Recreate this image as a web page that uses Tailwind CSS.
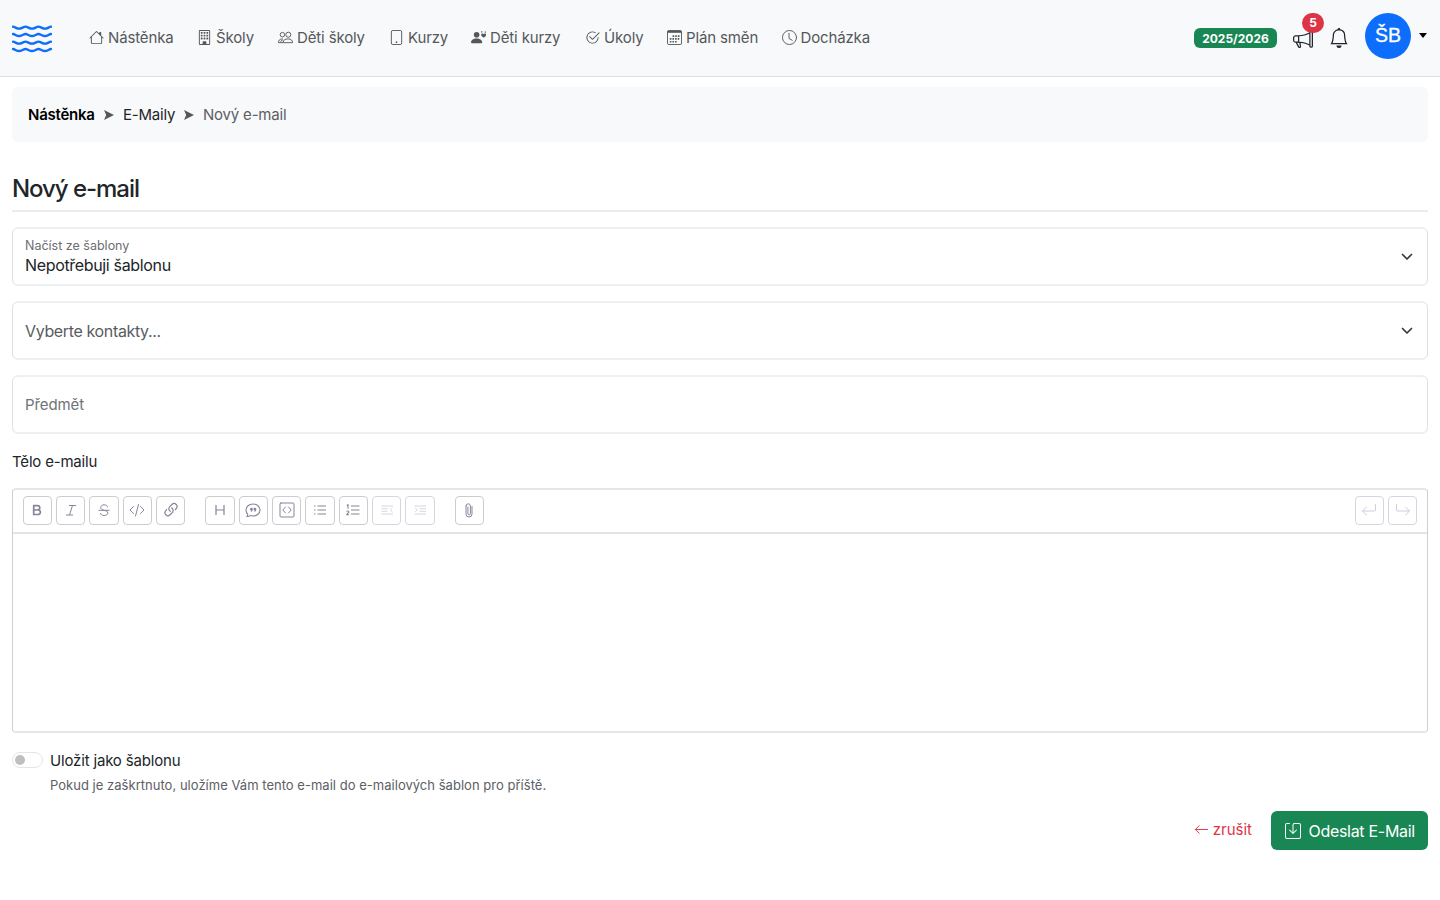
<!DOCTYPE html>
<html lang="cs">
<head>
<meta charset="utf-8">
<title>Nový e-mail</title>
<script src="https://cdn.jsdelivr.net/npm/@tailwindcss/browser@4"></script>
</head>
<body class="bg-white text-[#212529] font-['Inter',sans-serif] text-[15px] w-[1440px] h-[900px] overflow-hidden">
<header class="h-[77px] bg-[#f8f9fb] border-b border-[#dee2e6] flex items-center pl-3 pr-3 text-[#55585a]">
  <svg class="w-10 h-[30px] mt-px text-[#0d6efd]" viewBox="0 0 40 30" fill="none" stroke="currentColor" stroke-width="2.3" stroke-linecap="round">
    <path d="M1 2.7c2 .2 3.500 2 6 2s4.500-2 6.500-2 4 2 6.500 2 4.500-2 6.500-2 4 2 6.500 2 4-1.800 6-2M1 10c2 .2 3.500 2 6 2s4.500-2 6.500-2 4 2 6.500 2 4.500-2 6.500-2 4 2 6.500 2 4-1.800 6-2M1 17.700c2 .2 3.500 2 6 2s4.500-2 6.500-2 4 2 6.500 2 4.500-2 6.500-2 4 2 6.500 2 4-1.800 6-2M1 25c2 .2 3.500 2 6 2s4.500-2 6.500-2 4 2 6.500 2 4.500-2 6.500-2 4 2 6.500 2 4-1.800 6-2"/>
  </svg>
  <nav class="ml-[37px] flex items-center h-6 -mt-px whitespace-nowrap tracking-[-0.14px]">
    <a class="flex items-center gap-1 w-[108px]"><svg class="size-[15px]" viewBox="0 0 16 16" fill="currentColor"><path d="M8.707 1.5a1 1 0 0 0-1.414 0L.646 8.146a.5.5 0 0 0 .708.708L2 8.207V13.500A1.500 1.500 0 0 0 3.500 15h9a1.500 1.500 0 0 0 1.500-1.500V8.207l.646.647a.5.5 0 0 0 .708-.708L13 5.793V2.500a.5.5 0 0 0-.5-.5h-1a.5.5 0 0 0-.5.5v1.293zM13 7.207V13.500a.5.5 0 0 1-.5.5h-9a.5.5 0 0 1-.5-.5V7.207l5-5z"/></svg><span class="pt-[2px]">Nástěnka</span></a>
    <a class="flex items-center gap-1 w-[81px]"><svg class="size-[15px]" viewBox="0 0 16 16" fill="currentColor"><path d="M4 2.500a.5.5 0 0 1 .5-.5h1a.5.5 0 0 1 .5.5v1a.5.5 0 0 1-.5.5h-1a.5.5 0 0 1-.5-.5zm3 0a.5.5 0 0 1 .5-.5h1a.5.5 0 0 1 .5.5v1a.5.5 0 0 1-.5.5h-1a.5.5 0 0 1-.5-.5zm3.500-.5a.5.5 0 0 0-.5.5v1a.5.5 0 0 0 .5.5h1a.5.5 0 0 0 .5-.5v-1a.5.5 0 0 0-.5-.5zM4 5.500a.5.5 0 0 1 .5-.5h1a.5.5 0 0 1 .5.5v1a.5.5 0 0 1-.5.5h-1a.5.5 0 0 1-.5-.5zM7.500 5a.5.5 0 0 0-.5.5v1a.5.5 0 0 0 .5.5h1a.5.5 0 0 0 .5-.5v-1a.5.5 0 0 0-.5-.5zm2.500.5a.5.5 0 0 1 .5-.5h1a.5.5 0 0 1 .5.5v1a.5.5 0 0 1-.5.5h-1a.5.5 0 0 1-.5-.5zM4.500 8a.5.5 0 0 0-.5.5v1a.5.5 0 0 0 .5.5h1a.5.5 0 0 0 .5-.5v-1a.5.5 0 0 0-.5-.5zm2.500.5a.5.5 0 0 1 .5-.5h1a.5.5 0 0 1 .5.5v1a.5.5 0 0 1-.5.5h-1a.5.5 0 0 1-.5-.5zm3.500-.5a.5.5 0 0 0-.5.5v1a.5.5 0 0 0 .5.5h1a.5.5 0 0 0 .5-.5v-1a.5.5 0 0 0-.5-.5z"/><path d="M2 1a1 1 0 0 1 1-1h10a1 1 0 0 1 1 1v14a1 1 0 0 1-1 1H3a1 1 0 0 1-1-1zm11 0H3v14h3v-2.500a.5.5 0 0 1 .5-.5h3a.5.5 0 0 1 .5.5V15h3z"/></svg><span class="pt-[2px]">Školy</span></a>
    <a class="flex items-center gap-1 w-[111px]"><svg class="size-[15px]" viewBox="0 0 16 16" fill="none" stroke="currentColor" stroke-width="1"><circle cx="4.700" cy="5" r="2.400"/><circle cx="11" cy="5" r="2.700"/><path d="M5.500 13.500c0-3 2.200-4 5.300-4s4.700 1.500 4.700 4zM5.500 13.500h-5c0-2.500 1.200-4 4.500-4M3 13c0-1.500 1-2.300 2.500-2.500"/></svg><span class="pt-[2px]">Děti školy</span></a>
    <a class="flex items-center gap-1 w-[82px]"><svg class="size-[15px]" viewBox="0 0 16 16" fill="none" stroke="currentColor"><rect x="2.500" y=".5" width="11" height="15" rx="1.600"/><circle cx="8" cy="13" r=".9" fill="currentColor" stroke="none"/></svg><span class="pt-[2px]">Kurzy</span></a>
    <a class="flex items-center gap-1 w-[114px]"><svg class="size-[15px]" viewBox="0 0 16 16" fill="currentColor"><path d="M9 5a3 3 0 1 1-6 0 3 3 0 0 1 6 0m-9 8c0 1 1 1 1 1h10s1 0 1-1-1-4-6-4-6 3-6 4"/><path d="M13.500 8.100c-3.500-2-3-4.100-1.700-4.300.9-.1 1.500.4 1.700.8.200-.4.800-.9 1.700-.8 1.300.2 1.800 2.300-1.700 4.300M10.800 1.300h1.300v1.300h-1.300zM14.600 1.500h1.300v1.300h-1.300z"/></svg><span class="pt-[2px]">Děti kurzy</span></a>
    <a class="flex items-center gap-1 w-[82px]"><svg class="size-[15px]" viewBox="0 0 16 16" fill="currentColor"><path d="M2.500 8a5.500 5.500 0 0 1 8.250-4.764.5.5 0 0 0 .5-.866A6.500 6.500 0 1 0 14.500 8a.5.5 0 0 0-1 0 5.500 5.500 0 1 1-11 0"/><path d="M15.354 3.354a.5.5 0 0 0-.708-.708L8 9.293 5.354 6.646a.5.5 0 1 0-.708.708l3 3a.5.5 0 0 0 .708 0z"/></svg><span class="pt-[2px]">Úkoly</span></a>
    <a class="flex items-center gap-1 w-[114.5px]"><svg class="size-[15px]" viewBox="0 0 16 16"><rect x=".5" y=".5" width="15" height="15" rx="1.500" fill="none" stroke="currentColor"/><path d="M.5 1h15v2H.5z" fill="currentColor"/><path d="M6 6.500h8M3 9.500h11M3 12.500h8" stroke="currentColor" stroke-width="1.700" stroke-dasharray="1.700 1.100"/></svg><span class="pt-[2px]">Plán směn</span></a>
    <a class="flex items-center gap-1"><svg class="size-[15px]" viewBox="0 0 16 16" fill="none" stroke="currentColor" stroke-linecap="round"><circle cx="8" cy="8" r="7.500"/><path d="M7.500 3.500V9l3.500 2"/></svg><span class="pt-[2px]">Docházka</span></a>
  </nav>
  <div class="ml-auto flex items-center text-[#212529]">
    <span class="w-[83px] h-5 rounded-[6px] bg-[#198754] text-white text-[12px] font-bold flex items-center justify-center pt-px">2025/2026</span>
    <div class="relative ml-4 w-5 h-5 mt-px">
      <svg class="size-5" viewBox="0 0 16 16" fill="currentColor"><path d="M13 2.500a1.500 1.500 0 0 1 3 0v11a1.500 1.500 0 0 1-3 0v-.214c-2.162-1.241-4.490-1.843-6.912-2.083l.405 2.712A1 1 0 0 1 5.510 15.100h-.548a1 1 0 0 1-.916-.599l-1.850-3.490-.202-.003A2.014 2.014 0 0 1 0 9V7a2.020 2.020 0 0 1 1.992-2.013 75 75 0 0 0 2.483-.075c3.043-.154 6.148-.849 8.525-2.199zm1 0v11a.5.5 0 0 0 1 0v-11a.5.5 0 0 0-1 0m-1 1.350c-2.344 1.205-5.209 1.842-8 2.033v4.233q.270.015.537.036c2.568.189 5.093.744 7.463 1.993zm-9 6.215v-4.130a95 95 0 0 1-1.992.052A1.020 1.020 0 0 0 1 7v2c0 .550.448 1.002 1.006 1.009A61 61 0 0 1 4 10.065m-.657.975 1.609 3.037.010.024h.548l-.002-.014-.443-2.966a68 68 0 0 0-1.722-.082z"/></svg>
      <span class="absolute left-[9px] -top-[16px] w-[22px] h-5 rounded-full bg-[#dc3545] text-white text-[12px] font-bold flex items-center justify-center">5</span>
    </div>
    <svg class="ml-4 size-5" viewBox="0 0 16 16" fill="currentColor"><path d="M8 16a2 2 0 0 0 2-2H6a2 2 0 0 0 2 2M8 1.918l-.797.161A4 4 0 0 0 4 6c0 .628-.134 2.197-.459 3.742-.160.767-.376 1.566-.663 2.258h10.244c-.287-.692-.502-1.490-.663-2.258C12.134 8.197 12 6.628 12 6a4 4 0 0 0-3.203-3.920zM14.220 12c.223.447.481.801.780 1H1c.299-.199.557-.553.780-1C2.680 10.200 3 6.880 3 6c0-2.420 1.720-4.440 4.005-4.901a1 1 0 1 1 1.990 0A5 5 0 0 1 13 6c0 .880.320 4.200 1.220 6"/></svg>
    <span class="ml-4 -mt-[5px] size-[46px] rounded-full bg-[#0d6efd] text-white font-['Liberation_Sans',sans-serif] text-[19.5px] [-webkit-text-stroke:0.3px_white] flex items-center justify-center">ŠB</span>
    <span class="ml-2 mr-px -mt-[5px] border-x-[4.5px] border-t-[5px] border-x-transparent border-t-black"></span>
  </div>
</header>

<main class="px-3 pt-[10px]">
  <div class="h-[55px] rounded-[6px] bg-[#f8f9fb] px-4 flex items-center whitespace-nowrap">
    <b class="pt-[2px] font-semibold text-black w-[76px] tracking-[-0.25px]">Nástěnka</b>
    <svg class="w-[10px] h-[10px] mr-[9px]" viewBox="0 0 10 10" fill="#55585a"><path d="M0 0 10 5 0 10 2.200 5z"/></svg>
    <span class="pt-[2px] w-[61px] tracking-[-0.2px]">E-Maily</span>
    <svg class="w-[10px] h-[10px] mr-[9px]" viewBox="0 0 10 10" fill="#55585a"><path d="M0 0 10 5 0 10 2.200 5z"/></svg>
    <span class="pt-[2px] text-[#5c6065] tracking-[-0.2px]">Nový e-mail</span>
  </div>

  <h1 class="mt-[32px] h-[38px] border-b-2 border-[#ececed] text-[24px] leading-[30px] font-medium tracking-[-1.05px]">Nový e-mail</h1>

  <div class="mt-[15px] h-[59px] border-x border-y-2 border-x-[#dee2e6] border-y-[#eeeff1] rounded-[6px] px-3 flex items-center justify-between">
    <div class="flex flex-col pb-[2px]"><span class="text-[12.5px] leading-[18px] text-[#6b6e72]">Načíst ze šablony</span><span class="text-[16px] leading-[20px] tracking-[-0.34px]">Nepotřebuji šablonu</span></div>
    <svg class="w-4 h-3 mt-px" viewBox="0 0 16 12" fill="none" stroke="#343a40" stroke-width="1.700" stroke-linecap="round" stroke-linejoin="round"><path d="m3.500 3.500 4.500 4.500 4.500-4.500"/></svg>
  </div>
  <div class="mt-[15px] h-[59px] border-x border-y-2 border-x-[#dee2e6] border-y-[#eeeff1] rounded-[6px] px-3 flex items-center justify-between">
    <span class="text-[16px] text-[#595c5f] tracking-[-0.36px]">Vyberte kontakty...</span>
    <svg class="w-4 h-3 mt-px" viewBox="0 0 16 12" fill="none" stroke="#343a40" stroke-width="1.700" stroke-linecap="round" stroke-linejoin="round"><path d="m3.500 3.500 4.500 4.500 4.500-4.500"/></svg>
  </div>
  <div class="mt-[15px] h-[59px] border-x border-y-2 border-x-[#dee2e6] border-y-[#eeeff1] rounded-[6px] px-3 flex items-center"><span class="pt-[2px] text-[#6f7276] tracking-[-0.1px]">Předmět</span></div>

  <div class="mt-[17px] h-[22px] leading-[22px] tracking-[-0.19px]">Tělo e-mailu</div>

  <section class="mt-[15px] h-[245px] border-x border-y-2 border-x-[#cfcfcf] border-y-[#e6e6e6] rounded-[4px]">
    <div class="h-[44px] border-b-2 border-[#e4e4e4] pb-[2px] pl-[9.700px] pr-[9.700px] flex items-center text-[#85859b]">
      <div class="flex gap-1 mr-5">
        <span class="w-[29.330px] h-[29px] border border-[#cdcdcf] rounded-[4px] flex items-center justify-center"><svg class="size-4" viewBox="0 0 16 16" fill="none" stroke="currentColor" stroke-width="1.700" stroke-linejoin="round"><path d="M4.700 3.700h3.900a2 2 0 0 1 0 4.300H4.700zM4.700 8h4.400a2.200 2.200 0 0 1 0 4.500H4.700z"/></svg></span>
        <span class="w-[29.330px] h-[29px] border border-[#cdcdcf] rounded-[4px] flex items-center justify-center"><svg class="size-4" viewBox="0 0 16 16" fill="none" stroke="currentColor" stroke-width="1"><path d="M6 3.500h7M3 13h7M9.500 3.500 6.500 13"/></svg></span>
        <span class="w-[29.330px] h-[29px] border border-[#cdcdcf] rounded-[4px] flex items-center justify-center"><svg class="size-4" viewBox="0 0 16 16" fill="none" stroke="currentColor"><path d="M2.500 8.300h11M11.500 5.300c0-1.500-1.300-2.500-3.300-2.500-2.100 0-3.500 1-3.500 2.600 0 1.700 1.500 2.300 3.500 2.900 2.300.6 3.600 1.200 3.600 2.600S10.400 13.500 8.200 13.500s-3.700-1-3.700-2.500"/></svg></span>
        <span class="w-[29.330px] h-[29px] border border-[#cdcdcf] rounded-[4px] flex items-center justify-center"><svg class="size-4" viewBox="0 0 16 16" fill="none" stroke="currentColor" stroke-linecap="round" stroke-linejoin="round"><path d="M4.500 4.500 1 8l3.500 3.500M11.500 4.500 15 8l-3.500 3.500M9.500 2.500l-3 11.500"/></svg></span>
        <span class="w-[29.330px] h-[29px] border border-[#cdcdcf] rounded-[4px] flex items-center justify-center"><svg class="size-4" viewBox="1.300 1.100 13.400 13.400" fill="currentColor"><path d="M4.715 6.542 3.343 7.914a3 3 0 1 0 4.243 4.243l1.828-1.829A3 3 0 0 0 8.586 5.500L8 6.086a1 1 0 0 0-.154.199 2 2 0 0 1 .861 3.337L6.880 11.450a2 2 0 1 1-2.830-2.830l.793-.792a4 4 0 0 1-.128-1.287z"/><path d="M6.586 4.672A3 3 0 0 0 7.414 9.500l.775-.776a2 2 0 0 1-.896-3.346L9.120 3.550a2 2 0 1 1 2.830 2.830l-.793.792c.112.420.155.855.128 1.287l1.372-1.372a3 3 0 1 0-4.243-4.243z"/></svg></span>
      </div>
      <div class="flex gap-1 mr-5">
        <span class="w-[29.330px] h-[29px] border border-[#cdcdcf] rounded-[4px] flex items-center justify-center"><svg class="size-4" viewBox="0 0 16 16" fill="none" stroke="currentColor" stroke-width="1.200"><path d="M4 3v10M12 3v10M4 8h8"/></svg></span>
        <span class="w-[29.330px] h-[29px] border border-[#cdcdcf] rounded-[4px] flex items-center justify-center"><svg class="size-4" viewBox="0 0 16 16" fill="none" stroke="currentColor" stroke-width="1.100"><path d="M2.700 12.200C1.500 11 1 9.700 1 8c0-3.400 3.100-6 7-6s7 2.600 7 6-3.100 6-7 6c-1 0-1.800-.1-2.600-.4-1 .6-2.300.9-3.400.9.500-.6.800-1.400.7-2.300z"/><path d="M5 7.200a1.400 1.400 0 1 1 2.800 0c0 1.500-.7 2.300-1.700 2.800l-.4-.5c.5-.3.800-.6.900-1-1 .2-1.600-.5-1.600-1.300zM8.500 7.200a1.400 1.400 0 1 1 2.800 0c0 1.500-.7 2.300-1.700 2.800l-.4-.5c.5-.3.800-.6.900-1-1 .2-1.600-.5-1.600-1.300z" fill="currentColor" stroke="none"/></svg></span>
        <span class="w-[29.330px] h-[29px] border border-[#cdcdcf] rounded-[4px] flex items-center justify-center"><svg class="size-4" viewBox="0 0 16 16" fill="none" stroke="currentColor" stroke-linecap="round" stroke-linejoin="round"><rect x="1" y="1" width="14" height="14" rx="1"/><path d="M6.500 5 3.800 8l2.700 3M9.500 5l2.700 3-2.700 3"/></svg></span>
        <span class="w-[29.330px] h-[29px] border border-[#cdcdcf] rounded-[4px] flex items-center justify-center"><svg class="size-4" viewBox="0 0 16 16" fill="none" stroke="currentColor"><path d="M5.500 4H14M5.500 8H14M5.500 12H14M2 4h1.500M2 8h1.500M2 12h1.500"/></svg></span>
        <span class="w-[29.330px] h-[29px] border border-[#cdcdcf] rounded-[4px] flex items-center justify-center"><svg class="size-4" viewBox="0 0 16 16" fill="none" stroke="currentColor" stroke-width="1.100"><path d="M6 4h8.500M6 8h8.500M6 12h8.500M1.800 3.400 3 2.700v4M1.700 9.700c.3-1 2.200-.8 2.100.2 0 1-1.800 1.600-2 2.800H4"/></svg></span>
        <span class="w-[29.330px] h-[29px] border border-[#d5d7e0] rounded-[4px] flex items-center justify-center text-[#d5d7df]"><svg class="size-4" viewBox="0 0 16 16" fill="none" stroke="currentColor"><path d="M2.500 4H14M2.500 6.700h6M2.500 9.300h6M2.500 12H14M13.500 5.900 11.300 8l2.200 2.100"/></svg></span>
        <span class="w-[29.330px] h-[29px] border border-[#d5d7e0] rounded-[4px] flex items-center justify-center text-[#d5d7df]"><svg class="size-4" viewBox="0 0 16 16" fill="none" stroke="currentColor"><path d="M2.500 4H14M7.500 6.700H14M7.500 9.300H14M2.500 12H14M3 5.900 5.200 8 3 10.100"/></svg></span>
      </div>
      <span class="w-[29.330px] h-[29px] border border-[#cdcdcf] rounded-[4px] flex items-center justify-center"><svg class="size-4" viewBox="0 0 16 16" fill="none" stroke="currentColor" stroke-linecap="round"><path d="M5 4v8a3 3 0 0 0 6 0V4.500M5 4a2.200 2.200 0 0 1 4.400 0v7.600a1.200 1.200 0 0 1-2.500 0V5"/></svg></span>
      <div class="flex gap-1 ml-auto text-[#cdcfda]">
        <span class="w-[29.330px] h-[29px] border border-[#d5d7e0] rounded-[4px] flex items-center justify-center"><svg class="size-4" viewBox="0 0 16 16" fill="none" stroke="currentColor" stroke-linecap="round" stroke-linejoin="round"><path d="M14.500 2.500v5.500a1 1 0 0 1-1 1h-12M5.500 5l-4 4 4 4"/></svg></span>
        <span class="w-[29.330px] h-[29px] border border-[#d5d7e0] rounded-[4px] flex items-center justify-center"><svg class="size-4" viewBox="0 0 16 16" fill="none" stroke="currentColor" stroke-linecap="round" stroke-linejoin="round"><path d="M1.500 2.500v5.500a1 1 0 0 0 1 1h12M10.500 5l4 4-4 4"/></svg></span>
      </div>
    </div>
  </section>

  <div class="mt-[17px] flex">
    <span class="mt-[2px] w-[31px] h-4 rounded-full border border-[#e3e5e8] pl-[1.500px] flex items-center"><span class="size-[10px] rounded-full bg-[#bfbfbf]"></span></span>
    <div class="ml-[7px] flex flex-col whitespace-nowrap"><span class="leading-[22px] tracking-[-0.17px]">Uložit jako šablonu</span><span class="mt-[3px] text-[13px] leading-[20px] tracking-[0.025px] text-[#5c6065]">Pokud je zaškrtnuto, uložíme Vám tento e-mail do e-mailových šablon pro příště.</span></div>
  </div>

  <div class="mt-[16px] flex justify-end items-center whitespace-nowrap">
    <a class="flex items-center gap-[4px] text-[#dc3545] mr-[19px] -mt-[3px]"><svg class="size-[15px]" viewBox="0 0 16 16" fill="none" stroke="currentColor" stroke-linecap="round" stroke-linejoin="round"><path d="M14.500 8H1.500M5.500 4l-4 4 4 4"/></svg><span class="pt-[3px]">zrušit</span></a>
    <button class="w-[157px] h-[39px] rounded-[6px] bg-[#198754] text-white text-[16px] flex items-center pl-[13.5px] gap-[8px]"><svg class="size-4" viewBox="0 0 16 16" fill="currentColor"><path d="M2 1a1 1 0 0 0-1 1v12a1 1 0 0 0 1 1h12a1 1 0 0 0 1-1V2a1 1 0 0 0-1-1H9.500a1 1 0 0 0-1 1v7.293l2.646-2.647a.5.5 0 0 1 .708.708l-3.500 3.500a.5.5 0 0 1-.708 0l-3.500-3.500a.5.5 0 1 1 .708-.708L7.500 9.293V2a2 2 0 0 1 2-2H14a2 2 0 0 1 2 2v12a2 2 0 0 1-2 2H2a2 2 0 0 1-2-2V2a2 2 0 0 1 2-2h2.500a.5.5 0 0 1 0 1z"/></svg><span class="tracking-[-0.3px]">Odeslat E-Mail</span></button>
  </div>
</main>
</body>
</html>
